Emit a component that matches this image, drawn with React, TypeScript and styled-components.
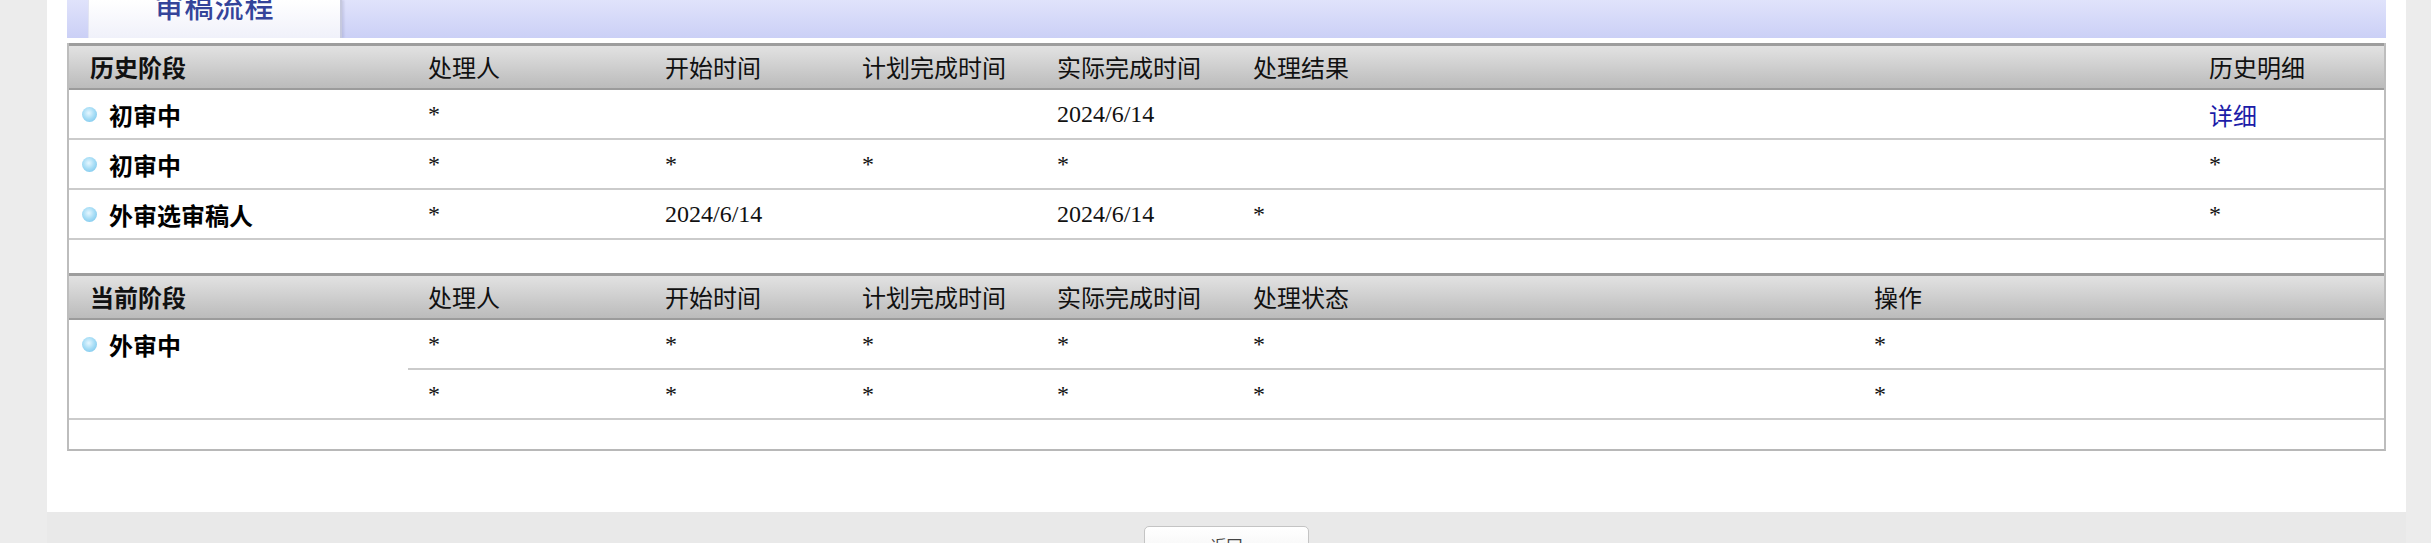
import React from "react";
import styled, { createGlobalStyle } from "styled-components";

const GlobalStyle = createGlobalStyle`
  html, body {
    margin: 0;
    padding: 0;
    background: #ececec;
    overflow: hidden;
  }
  body {
    font-family: "Noto Sans CJK SC", "Noto Sans", sans-serif;
  }
`;

const Page = styled.div`
  display: flex;
  flex-direction: column;
  padding: 0 25px 0 47px;
  height: 543px;
  box-sizing: border-box;
`;

const Panel = styled.div`
  background: #ffffff;
  padding: 0 20px 61px;
`;

const TabBar = styled.div`
  height: 38px;
  margin-bottom: 5px;
  display: flex;
  padding-left: 21px;
  overflow: hidden;
  background: linear-gradient(to bottom, #e0e3fb 0%, #cbd0f6 100%);
`;

const Tab = styled.div`
  width: 254px;
  box-sizing: border-box;
  display: flex;
  align-items: flex-end;
  justify-content: center;
  padding-bottom: 18px;
  background: linear-gradient(to bottom, #ffffff 0%, #f0f1fa 100%);
  border-left: 1px solid #e2e4f2;
  border-right: 2px solid #c6c9de;
  box-shadow: 2px 0 2px rgba(80, 80, 120, 0.15);
  font-size: 29px;
  line-height: 29px;
  letter-spacing: 1px;
  color: #34449a;
  font-weight: 500;
`;

const Frame = styled.div`
  border-left: 2px solid #bdbdbd;
  border-right: 2px solid #bdbdbd;
  border-bottom: 2px solid #b8b8b8;
`;

const Grid = styled.div<{ $cols: string }>`
  display: grid;
  grid-template-columns: ${(p) => p.$cols};
`;

const HeadCell = styled.div<{ $strong?: boolean; $first?: boolean }>`
  height: 47px;
  box-sizing: border-box;
  border-top: 3px solid #9d9d9d;
  border-bottom: 2px solid #9b9b9b;
  background: linear-gradient(to bottom, #e2e2e2 0%, #bbbbbb 100%);
  padding-left: ${(p) => (p.$first ? 21 : 20)}px;
  display: flex;
  align-items: center;
  font-size: 24px;
  line-height: 28px;
  font-weight: ${(p) => (p.$strong ? 700 : 400)};
  color: #111111;
  white-space: nowrap;
`;

const Cell = styled.div<{ $first?: boolean; $span?: boolean }>`
  height: ${(p) => (p.$span ? 100 : 50)}px;
  box-sizing: border-box;
  border-bottom: 2px solid #cbcbcb;
  padding-left: ${(p) => (p.$first ? 13 : 20)}px;
  display: flex;
  align-items: ${(p) => (p.$span ? "flex-start" : "center")};
  grid-row: ${(p) => (p.$span ? "span 2" : "auto")};
  font-family: "Liberation Serif", "Times New Roman", serif;
  font-size: 24px;
  color: #111111;
  white-space: nowrap;
`;

const Stage = styled.div`
  height: 48px;
  display: flex;
  align-items: center;
  gap: 12px;
  font-family: "Noto Sans CJK SC", "Noto Sans", sans-serif;
  font-size: 24px;
  font-weight: 700;
  color: #000000;
`;

const Dot = styled.span`
  width: 15px;
  height: 15px;
  border-radius: 50%;
  flex: none;
  background: radial-gradient(circle at 45% 40%, #e6f7ff 0%, #a9def6 45%, #6cc0ea 100%);
`;

const Link = styled.a`
  font-family: "Noto Sans CJK SC", "Noto Sans", sans-serif;
  font-size: 24px;
  color: #1c1ca8;
  text-decoration: none;
`;

const Spacer = styled.div<{ $h: number }>`
  height: ${(p) => p.$h}px;
`;

const Footer = styled.div`
  flex: 1;
  background: #e9e9e9;
  display: flex;
  justify-content: center;
  padding-top: 14px;
`;

const Button = styled.button`
  width: 165px;
  height: 40px;
  box-sizing: border-box;
  border: 1px solid #c4c4c4;
  border-radius: 5px;
  background: linear-gradient(to bottom, #ffffff 0%, #f1f1f1 100%);
  font-family: "Noto Sans CJK SC", "Noto Sans", sans-serif;
  font-size: 16px;
  color: #444444;
  padding-top: 6px;
  align-self: flex-start;
  display: flex;
  justify-content: center;
  align-items: flex-start;
`;

const HIST_COLS = "339px 237px 197px 195px 196px 956px 195px";
const CUR_COLS = "339px 237px 197px 195px 196px 621px 530px";

type HistRow = { stage: string; cells: React.ReactNode[] };

const history: HistRow[] = [
  { stage: "初审中", cells: ["*", "", "", "2024/6/14", "", <Link href="#">详细</Link>] },
  { stage: "初审中", cells: ["*", "*", "*", "*", "", "*"] },
  { stage: "外审选审稿人", cells: ["*", "2024/6/14", "", "2024/6/14", "*", "*"] },
];

const histHead = ["处理人", "开始时间", "计划完成时间", "实际完成时间", "处理结果", "历史明细"];
const curHead = ["处理人", "开始时间", "计划完成时间", "实际完成时间", "处理状态", "操作"];
const curRows = [
  ["*", "*", "*", "*", "*", "*"],
  ["*", "*", "*", "*", "*", "*"],
];

export default function App() {
  return (
    <>
      <GlobalStyle />
      <Page>
        <Panel>
          <TabBar>
            <Tab>审稿流程</Tab>
          </TabBar>
          <Frame>
            <Grid $cols={HIST_COLS}>
              <HeadCell $strong $first>历史阶段</HeadCell>
              {histHead.map((h) => (
                <HeadCell key={h}>{h}</HeadCell>
              ))}
              {history.map((r, i) => (
                <React.Fragment key={i}>
                  <Cell $first>
                    <Stage>
                      <Dot />
                      {r.stage}
                    </Stage>
                  </Cell>
                  {r.cells.map((c, j) => (
                    <Cell key={j}>{c}</Cell>
                  ))}
                </React.Fragment>
              ))}
            </Grid>
            <Spacer $h={33} />
            <Grid $cols={CUR_COLS}>
              <HeadCell $strong $first>当前阶段</HeadCell>
              {curHead.map((h) => (
                <HeadCell key={h}>{h}</HeadCell>
              ))}
              <Cell $first $span>
                <Stage>
                  <Dot />
                  外审中
                </Stage>
              </Cell>
              {curRows.map((r, i) =>
                r.map((c, j) => <Cell key={`${i}-${j}`}>{c}</Cell>)
              )}
            </Grid>
            <Spacer $h={29} />
          </Frame>
        </Panel>
        <Footer>
          <Button>返回</Button>
        </Footer>
      </Page>
    </>
  );
}
